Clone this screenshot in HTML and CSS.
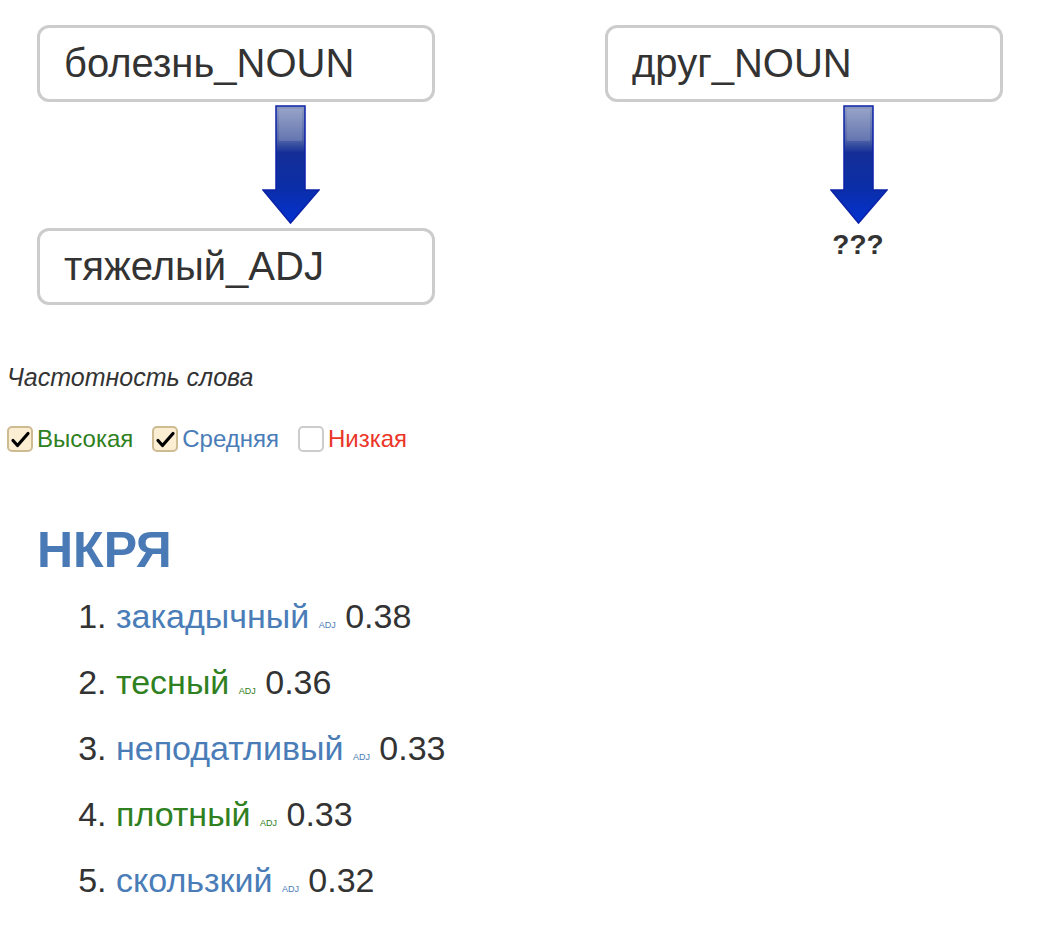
FILE: index.html
```html
<!DOCTYPE html>
<html lang="ru">
<head>
<meta charset="utf-8">
<title>Аналогии</title>
<link rel="stylesheet" href="styles.css">
</head>
<body>
<div class="page">
  <div class="pairs">
    <div class="col">
      <div class="word-box">болезнь_NOUN</div>
      <div class="arrow-wrap">
        <svg class="arrow" width="58" height="120" viewBox="0 0 58 120">
          <defs>
            <linearGradient id="ag1" x1="0" y1="0" x2="0" y2="1">
              <stop offset="0" stop-color="#8d9ac2"/>
              <stop offset="0.28" stop-color="#5366a8"/>
              <stop offset="0.4" stop-color="#142e96"/>
              <stop offset="0.7" stop-color="#0a2ea8"/>
              <stop offset="1" stop-color="#0432d0"/>
            </linearGradient>
          </defs>
          <path d="M14 1 H43 V85 H57 L28.5 118 L1 85 H14 Z" fill="url(#ag1)" stroke="#0c22a8" stroke-width="1.5" stroke-linejoin="miter"/>
          <rect x="17" y="4" width="23" height="32" fill="#ffffff" opacity="0.12"/>
        </svg>
      </div>
      <div class="word-box">тяжелый_ADJ</div>
    </div>
    <div class="col">
      <div class="word-box">друг_NOUN</div>
      <div class="arrow-wrap">
        <svg class="arrow" width="58" height="120" viewBox="0 0 58 120">
          <defs>
            <linearGradient id="ag2" x1="0" y1="0" x2="0" y2="1">
              <stop offset="0" stop-color="#8d9ac2"/>
              <stop offset="0.28" stop-color="#5366a8"/>
              <stop offset="0.4" stop-color="#142e96"/>
              <stop offset="0.7" stop-color="#0a2ea8"/>
              <stop offset="1" stop-color="#0432d0"/>
            </linearGradient>
          </defs>
          <path d="M14 1 H43 V85 H57 L28.5 118 L1 85 H14 Z" fill="url(#ag2)" stroke="#0c22a8" stroke-width="1.5" stroke-linejoin="miter"/>
          <rect x="17" y="4" width="23" height="32" fill="#ffffff" opacity="0.12"/>
        </svg>
      </div>
      <div class="unknown">???</div>
    </div>
  </div>

  <div class="freq">
    <div class="freq-title">Частотность слова</div>
    <div class="freq-options">
      <label class="opt"><span class="cb checked"><svg width="25" height="25" viewBox="0 0 25 25"><path d="M5 13.5 L9.5 18.5 L20 6.5" fill="none" stroke="#000" stroke-width="3.2" stroke-linecap="round" stroke-linejoin="round"/></svg></span><span class="lbl high">Высокая</span></label>
      <label class="opt"><span class="cb checked"><svg width="25" height="25" viewBox="0 0 25 25"><path d="M5 13.5 L9.5 18.5 L20 6.5" fill="none" stroke="#000" stroke-width="3.2" stroke-linecap="round" stroke-linejoin="round"/></svg></span><span class="lbl mid">Средняя</span></label>
      <label class="opt"><span class="cb"></span><span class="lbl low">Низкая</span></label>
    </div>
  </div>

  <div class="results">
    <h2 class="src">НКРЯ</h2>
    <ol class="res-list">
      <li><span class="w mid">закадычный</span> <span class="pos mid">ADJ</span> <span class="score">0.38</span></li>
      <li><span class="w high">тесный</span> <span class="pos high">ADJ</span> <span class="score">0.36</span></li>
      <li><span class="w mid">неподатливый</span> <span class="pos mid">ADJ</span> <span class="score">0.33</span></li>
      <li><span class="w high">плотный</span> <span class="pos high">ADJ</span> <span class="score">0.33</span></li>
      <li><span class="w mid">скользкий</span> <span class="pos mid">ADJ</span> <span class="score">0.32</span></li>
    </ol>
  </div>
</div>
</body>
</html>
```
FILE: styles.css
```css
html, body {
  margin: 0;
  padding: 0;
  background: #ffffff;
}

body {
  font-family: "Liberation Sans", Arial, Helvetica, sans-serif;
  color: #333333;
}

.page {
  padding: 25px 0 0 0;
}

.pairs {
  display: flex;
  gap: 170px;
  padding-left: 37px;
}

.col {
  display: flex;
  flex-direction: column;
  width: 398px;
}

.word-box {
  box-sizing: border-box;
  width: 398px;
  height: 77px;
  border: 3px solid #cccccc;
  border-radius: 12px;
  display: flex;
  align-items: center;
  padding-left: 24px;
  font-size: 40px;
  color: #333333;
}

.arrow-wrap {
  height: 118px;
  margin: 4px 0 4px 0;
  padding-left: 225px;
}

.arrow {
  display: block;
  margin-top: -1px;
}

.unknown {
  font-weight: bold;
  font-size: 28px;
  line-height: 30px;
  margin-left: 225px;
  width: 56px;
  text-align: center;
  margin-top: 2px;
}

.freq {
  padding-left: 7px;
  margin-top: 58px;
}

.freq-title {
  font-style: italic;
  font-size: 25px;
  line-height: 28px;
}

.freq-options {
  display: flex;
  gap: 19px;
  margin-top: 34px;
}

.opt {
  display: flex;
  align-items: center;
  gap: 4px;
}

.cb {
  box-sizing: border-box;
  width: 26px;
  height: 26px;
  border: 2px solid #cccccc;
  border-radius: 5px;
  background: #ffffff;
  display: flex;
  align-items: center;
  justify-content: center;
}

.cb svg {
  display: block;
  flex: none;
}

.cb.checked {
  background: #fbeed3;
  border-color: #cdbb92;
}

.lbl {
  font-size: 24px;
  line-height: 28px;
}

.high { color: #2f8021; }
.mid { color: #4a7db8; }
.low { color: #ea3528; }

.results {
  padding-left: 37px;
  margin-top: 70px;
}

.src {
  margin: 0;
  font-size: 50px;
  font-weight: bold;
  line-height: 54px;
  color: #4a7ab5;
}

.res-list {
  margin: 6px 0 0 0;
  padding-left: 79px;
  font-size: 34px;
  line-height: 66px;
}

.pos {
  font-size: 9px;
  line-height: 1;
}

.score {
  color: #333333;
}
```
